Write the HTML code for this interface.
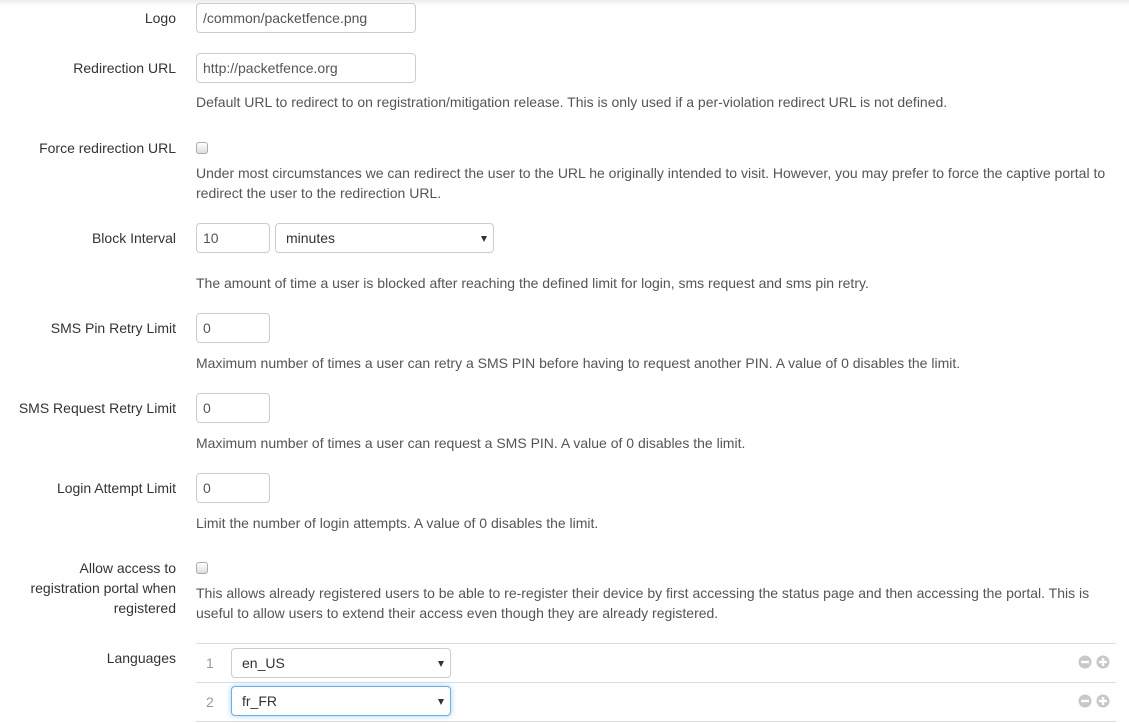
<!DOCTYPE html>
<html><head><meta charset="utf-8">
<style>
*{box-sizing:border-box;margin:0;padding:0}
body{width:1129px;height:723px;overflow:hidden;background:#fff;font-family:"Liberation Sans",Arial,sans-serif;font-size:14px;color:#333;position:relative}
.top{position:absolute;left:0;top:0;width:1129px;height:6px;background:linear-gradient(#ececec,#fff)}
.l{position:absolute;right:953px;text-align:right;line-height:20px;width:176px}
.h{position:absolute;left:196px;color:#555;line-height:20px;width:920px}
.in{position:absolute;height:30px;border:1px solid #ccc;border-radius:4px;padding:0 6px;line-height:28px;color:#555;background:#fff}
.sel{position:absolute;height:30px;border:1px solid #ccc;border-radius:4px;padding:0 10px;line-height:28px;color:#333;background:#fff}
.sel:after{content:"";position:absolute;right:6px;top:12px;border-left:3px solid transparent;border-right:3px solid transparent;border-top:6px solid #333}
.cb{position:absolute;left:196px;width:12px;height:12px;border:1px solid #aaa;border-radius:3px;background:linear-gradient(#fff,#ddd)}
.hr{position:absolute;left:196px;width:920px;height:1px;background:#ddd}
.n{position:absolute;left:206px;color:#999;line-height:20px}
.ic{position:absolute;left:1078px}
</style></head><body>
<div class="top"></div>

<div class="l" style="top:8px">Logo</div>
<div class="in" style="left:196px;top:3px;width:220px">/common/packetfence.png</div>

<div class="l" style="top:58px">Redirection URL</div>
<div class="in" style="left:196px;top:53px;width:220px">http://packetfence.org</div>
<div class="h" style="top:92px">Default URL to redirect to on registration/mitigation release. This is only used if a per-violation redirect URL is not defined.</div>

<div class="l" style="top:138px">Force redirection URL</div>
<div class="cb" style="top:142px"></div>
<div class="h" style="top:163px">Under most circumstances we can redirect the user to the URL he originally intended to visit. However, you may prefer to force the captive portal to redirect the user to the redirection URL.</div>

<div class="l" style="top:228px">Block Interval</div>
<div class="in" style="left:196px;top:223px;width:74px">10</div>
<div class="sel" style="left:275px;top:223px;width:219px">minutes</div>
<div class="h" style="top:273px">The amount of time a user is blocked after reaching the defined limit for login, sms request and sms pin retry.</div>

<div class="l" style="top:318px">SMS Pin Retry Limit</div>
<div class="in" style="left:196px;top:313px;width:74px">0</div>
<div class="h" style="top:353px">Maximum number of times a user can retry a SMS PIN before having to request another PIN. A value of 0 disables the limit.</div>

<div class="l" style="top:398px">SMS Request Retry Limit</div>
<div class="in" style="left:196px;top:393px;width:74px">0</div>
<div class="h" style="top:433px">Maximum number of times a user can request a SMS PIN. A value of 0 disables the limit.</div>

<div class="l" style="top:478px">Login Attempt Limit</div>
<div class="in" style="left:196px;top:473px;width:74px">0</div>
<div class="h" style="top:513px">Limit the number of login attempts. A value of 0 disables the limit.</div>

<div class="l" style="top:558px;width:160px">Allow access to registration portal when registered</div>
<div class="cb" style="top:562px"></div>
<div class="h" style="top:583px">This allows already registered users to be able to re-register their device by first accessing the status page and then accessing the portal. This is useful to allow users to extend their access even though they are already registered.</div>

<div class="l" style="top:648px">Languages</div>
<div class="hr" style="top:643px"></div>
<div class="n" style="top:653px">1</div>
<div class="sel" style="left:231px;top:648px;width:220px">en_US</div>
<div class="hr" style="top:682px"></div>
<div class="n" style="top:692px">2</div>
<div class="sel" style="left:231px;top:686px;width:220px;border-color:#66afe9;box-shadow:0 0 6px rgba(102,175,233,.6)">fr_FR</div>
<div class="hr" style="top:721px"></div>

<svg class="ic" style="top:655px" width="34" height="14" viewBox="0 0 34 14"><circle cx="7" cy="7" r="6.5" fill="#c8c8c8"/><rect x="3" y="5.8" width="8" height="2.4" fill="#fff"/><circle cx="25" cy="7" r="6.5" fill="#c8c8c8"/><rect x="21" y="5.8" width="8" height="2.4" fill="#fff"/><rect x="23.8" y="3" width="2.4" height="8" fill="#fff"/></svg>
<svg class="ic" style="top:694px" width="34" height="14" viewBox="0 0 34 14"><circle cx="7" cy="7" r="6.5" fill="#c8c8c8"/><rect x="3" y="5.8" width="8" height="2.4" fill="#fff"/><circle cx="25" cy="7" r="6.5" fill="#c8c8c8"/><rect x="21" y="5.8" width="8" height="2.4" fill="#fff"/><rect x="23.8" y="3" width="2.4" height="8" fill="#fff"/></svg>
</body></html>
